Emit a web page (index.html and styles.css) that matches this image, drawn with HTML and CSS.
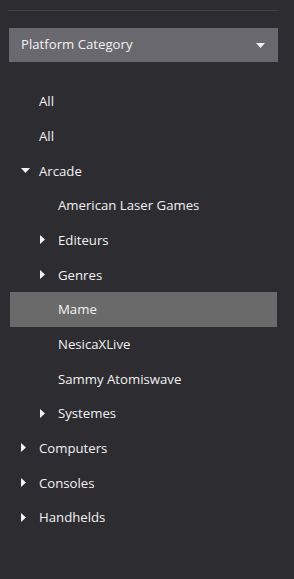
FILE: index.html
```html
<!DOCTYPE html>
<html>
<head>
<meta charset="utf-8">
<link rel="stylesheet" href="styles.css">
</head>
<body>
<div class="panel">
  <div class="rule"></div>
  <div class="select">
    <span class="select-label">Platform Category</span>
    <svg class="caret" width="9" height="5" viewBox="0 0 9 5"><path d="M0 0H9L4.5 5Z" fill="#f2f2f2"/></svg>
  </div>
  <ul class="tree">
    <li class="row lvl0"><span class="arrow"></span><span class="label">All</span></li>
    <li class="row lvl0"><span class="arrow"></span><span class="label">All</span></li>
    <li class="row lvl0"><span class="arrow"><svg width="9" height="5" viewBox="0 0 9 5"><path d="M0 0H9L4.5 5Z" fill="#f2f2f2"/></svg></span><span class="label">Arcade</span></li>
    <li class="row lvl1"><span class="arrow"></span><span class="label">American Laser Games</span></li>
    <li class="row lvl1"><span class="arrow"><svg width="5" height="9" viewBox="0 0 5 9"><path d="M0 0V9L5 4.5Z" fill="#f2f2f2"/></svg></span><span class="label">Editeurs</span></li>
    <li class="row lvl1"><span class="arrow"><svg width="5" height="9" viewBox="0 0 5 9"><path d="M0 0V9L5 4.5Z" fill="#f2f2f2"/></svg></span><span class="label">Genres</span></li>
    <li class="row lvl1 selected"><span class="arrow"></span><span class="label">Mame</span></li>
    <li class="row lvl1"><span class="arrow"></span><span class="label">NesicaXLive</span></li>
    <li class="row lvl1"><span class="arrow"></span><span class="label">Sammy Atomiswave</span></li>
    <li class="row lvl1"><span class="arrow"><svg width="5" height="9" viewBox="0 0 5 9"><path d="M0 0V9L5 4.5Z" fill="#f2f2f2"/></svg></span><span class="label">Systemes</span></li>
    <li class="row lvl0"><span class="arrow"><svg width="5" height="9" viewBox="0 0 5 9"><path d="M0 0V9L5 4.5Z" fill="#f2f2f2"/></svg></span><span class="label">Computers</span></li>
    <li class="row lvl0"><span class="arrow"><svg width="5" height="9" viewBox="0 0 5 9"><path d="M0 0V9L5 4.5Z" fill="#f2f2f2"/></svg></span><span class="label">Consoles</span></li>
    <li class="row lvl0"><span class="arrow"><svg width="5" height="9" viewBox="0 0 5 9"><path d="M0 0V9L5 4.5Z" fill="#f2f2f2"/></svg></span><span class="label">Handhelds</span></li>
  </ul>
</div>
</body>
</html>
```

FILE: styles.css
```css
html, body {
  margin: 0;
  padding: 0;
  background: #2d2c31;
  height: 100%;
}
.panel {
  font-family: "Open Sans", "Noto Sans", sans-serif;
  font-size: 13.2px;
  color: #f2f2f2;
  padding-top: 10px;
}
.rule {
  height: 1px;
  background: #404045;
  margin: 0 15px 0 8px;
}
.select {
  margin: 17px 16px 0 9px;
  height: 34px;
  background: #69686e;
  display: flex;
  align-items: center;
  justify-content: space-between;
  padding: 0 13px 0 12px;
}
.select-label {
  line-height: 1;
}
.caret {
  display: block;
}
.tree {
  list-style: none;
  margin: 22px 0 0 0;
  padding: 0;
}
.row {
  height: 34.67px;
  display: flex;
  align-items: center;
  margin: 0 17px 0 10px;
}
.row.selected {
  background: #6a6a6a;
}
.arrow {
  display: flex;
  align-items: center;
  justify-content: flex-start;
  flex: none;
}
.lvl0 .arrow {
  padding-left: 11px;
  width: 18px;
}
.lvl1 .arrow {
  padding-left: 30px;
  width: 18px;
}
.arrow svg {
  display: block;
}
.label {
  white-space: nowrap;
}
```
